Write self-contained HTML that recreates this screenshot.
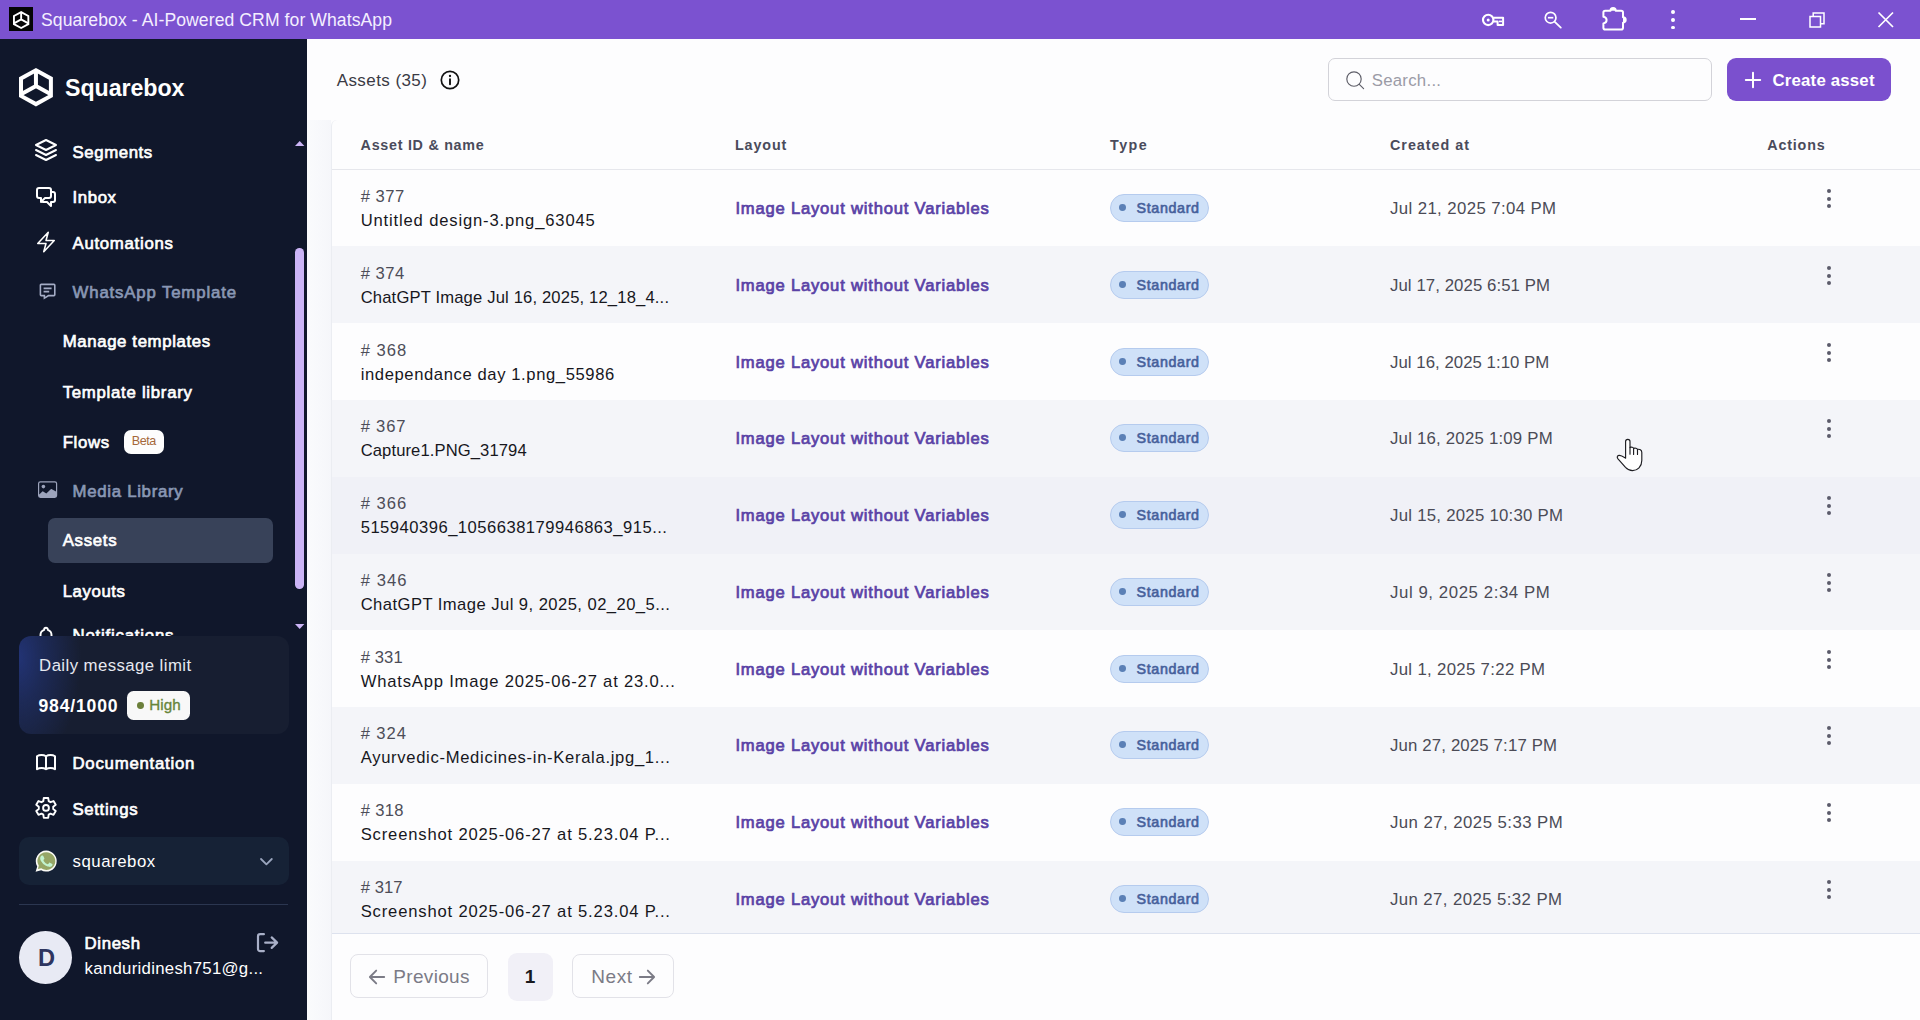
<!DOCTYPE html>
<html><head><meta charset="utf-8"><title>Squarebox - AI-Powered CRM for WhatsApp</title>
<style>
html,body{margin:0;padding:0;}
body{width:1920px;height:1020px;overflow:hidden;position:relative;background:#fdfdfe;font-family:"Liberation Sans",sans-serif;}
.t{position:absolute;white-space:pre;font-family:"Liberation Sans",sans-serif;}
div{box-sizing:border-box;}
</style></head><body>
<div style="position:absolute;left:307px;top:38.6px;width:1613.00px;height:981.40px;background:#fdfdfe;"></div>
<div style="position:absolute;left:307px;top:120.4px;width:24.00px;height:899.60px;background:linear-gradient(90deg,#fafbfd 0%,#f8f9fc 45%,#f5f6fa 100%);"></div>
<div style="position:absolute;left:330.6px;top:120.4px;width:1589.40px;height:899.60px;background:#fdfdfe;border-left:1px solid #ebedf2;border-top-left-radius:6px;"></div>
<div style="position:absolute;left:331.6px;top:168.8px;width:1588.40px;height:1.00px;background:#e6e7ec;"></div>
<div style="position:absolute;left:331.6px;top:169.6px;width:1588.40px;height:76.80px;background:#fdfdfe;"></div>
<div style="position:absolute;left:1109.9px;top:193.8px;width:99.40px;height:28.10px;background:#cfe1f8;border:1px solid #b5cbee;border-radius:14.5px;"></div>
<div style="position:absolute;left:1119px;top:204.4px;width:6.80px;height:6.80px;background:#5b80b6;border-radius:50%;"></div>
<div style="position:absolute;left:1827.2px;top:188.6px;width:4.20px;height:4.20px;background:#5b5b6b;border-radius:50%;"></div>
<div style="position:absolute;left:1827.2px;top:196.5px;width:4.20px;height:4.20px;background:#5b5b6b;border-radius:50%;"></div>
<div style="position:absolute;left:1827.2px;top:204.3px;width:4.20px;height:4.20px;background:#5b5b6b;border-radius:50%;"></div>
<div style="position:absolute;left:331.6px;top:246.4px;width:1588.40px;height:76.80px;background:#f4f5f9;"></div>
<div style="position:absolute;left:1109.9px;top:270.8px;width:99.40px;height:28.10px;background:#cfe1f8;border:1px solid #b5cbee;border-radius:14.5px;"></div>
<div style="position:absolute;left:1119px;top:281.4px;width:6.80px;height:6.80px;background:#5b80b6;border-radius:50%;"></div>
<div style="position:absolute;left:1827.2px;top:265.6px;width:4.20px;height:4.20px;background:#5b5b6b;border-radius:50%;"></div>
<div style="position:absolute;left:1827.2px;top:273.5px;width:4.20px;height:4.20px;background:#5b5b6b;border-radius:50%;"></div>
<div style="position:absolute;left:1827.2px;top:281.3px;width:4.20px;height:4.20px;background:#5b5b6b;border-radius:50%;"></div>
<div style="position:absolute;left:331.6px;top:323.2px;width:1588.40px;height:76.80px;background:#fdfdfe;"></div>
<div style="position:absolute;left:1109.9px;top:347.8px;width:99.40px;height:28.10px;background:#cfe1f8;border:1px solid #b5cbee;border-radius:14.5px;"></div>
<div style="position:absolute;left:1119px;top:358.4px;width:6.80px;height:6.80px;background:#5b80b6;border-radius:50%;"></div>
<div style="position:absolute;left:1827.2px;top:342.6px;width:4.20px;height:4.20px;background:#5b5b6b;border-radius:50%;"></div>
<div style="position:absolute;left:1827.2px;top:350.5px;width:4.20px;height:4.20px;background:#5b5b6b;border-radius:50%;"></div>
<div style="position:absolute;left:1827.2px;top:358.3px;width:4.20px;height:4.20px;background:#5b5b6b;border-radius:50%;"></div>
<div style="position:absolute;left:331.6px;top:400.0px;width:1588.40px;height:76.80px;background:#f4f5f9;"></div>
<div style="position:absolute;left:1109.9px;top:423.8px;width:99.40px;height:28.10px;background:#cfe1f8;border:1px solid #b5cbee;border-radius:14.5px;"></div>
<div style="position:absolute;left:1119px;top:434.4px;width:6.80px;height:6.80px;background:#5b80b6;border-radius:50%;"></div>
<div style="position:absolute;left:1827.2px;top:418.6px;width:4.20px;height:4.20px;background:#5b5b6b;border-radius:50%;"></div>
<div style="position:absolute;left:1827.2px;top:426.5px;width:4.20px;height:4.20px;background:#5b5b6b;border-radius:50%;"></div>
<div style="position:absolute;left:1827.2px;top:434.3px;width:4.20px;height:4.20px;background:#5b5b6b;border-radius:50%;"></div>
<div style="position:absolute;left:331.6px;top:476.8px;width:1588.40px;height:76.80px;background:#f0f1f7;"></div>
<div style="position:absolute;left:1109.9px;top:500.8px;width:99.40px;height:28.10px;background:#cfe1f8;border:1px solid #b5cbee;border-radius:14.5px;"></div>
<div style="position:absolute;left:1119px;top:511.4px;width:6.80px;height:6.80px;background:#5b80b6;border-radius:50%;"></div>
<div style="position:absolute;left:1827.2px;top:495.6px;width:4.20px;height:4.20px;background:#5b5b6b;border-radius:50%;"></div>
<div style="position:absolute;left:1827.2px;top:503.5px;width:4.20px;height:4.20px;background:#5b5b6b;border-radius:50%;"></div>
<div style="position:absolute;left:1827.2px;top:511.3px;width:4.20px;height:4.20px;background:#5b5b6b;border-radius:50%;"></div>
<div style="position:absolute;left:331.6px;top:553.6px;width:1588.40px;height:76.80px;background:#f4f5f9;"></div>
<div style="position:absolute;left:1109.9px;top:577.8px;width:99.40px;height:28.10px;background:#cfe1f8;border:1px solid #b5cbee;border-radius:14.5px;"></div>
<div style="position:absolute;left:1119px;top:588.4px;width:6.80px;height:6.80px;background:#5b80b6;border-radius:50%;"></div>
<div style="position:absolute;left:1827.2px;top:572.6px;width:4.20px;height:4.20px;background:#5b5b6b;border-radius:50%;"></div>
<div style="position:absolute;left:1827.2px;top:580.5px;width:4.20px;height:4.20px;background:#5b5b6b;border-radius:50%;"></div>
<div style="position:absolute;left:1827.2px;top:588.3px;width:4.20px;height:4.20px;background:#5b5b6b;border-radius:50%;"></div>
<div style="position:absolute;left:331.6px;top:630.4px;width:1588.40px;height:76.80px;background:#fdfdfe;"></div>
<div style="position:absolute;left:1109.9px;top:654.8px;width:99.40px;height:28.10px;background:#cfe1f8;border:1px solid #b5cbee;border-radius:14.5px;"></div>
<div style="position:absolute;left:1119px;top:665.4px;width:6.80px;height:6.80px;background:#5b80b6;border-radius:50%;"></div>
<div style="position:absolute;left:1827.2px;top:649.6px;width:4.20px;height:4.20px;background:#5b5b6b;border-radius:50%;"></div>
<div style="position:absolute;left:1827.2px;top:657.5px;width:4.20px;height:4.20px;background:#5b5b6b;border-radius:50%;"></div>
<div style="position:absolute;left:1827.2px;top:665.3px;width:4.20px;height:4.20px;background:#5b5b6b;border-radius:50%;"></div>
<div style="position:absolute;left:331.6px;top:707.2px;width:1588.40px;height:76.80px;background:#f4f5f9;"></div>
<div style="position:absolute;left:1109.9px;top:730.8px;width:99.40px;height:28.10px;background:#cfe1f8;border:1px solid #b5cbee;border-radius:14.5px;"></div>
<div style="position:absolute;left:1119px;top:741.4px;width:6.80px;height:6.80px;background:#5b80b6;border-radius:50%;"></div>
<div style="position:absolute;left:1827.2px;top:725.6px;width:4.20px;height:4.20px;background:#5b5b6b;border-radius:50%;"></div>
<div style="position:absolute;left:1827.2px;top:733.5px;width:4.20px;height:4.20px;background:#5b5b6b;border-radius:50%;"></div>
<div style="position:absolute;left:1827.2px;top:741.3px;width:4.20px;height:4.20px;background:#5b5b6b;border-radius:50%;"></div>
<div style="position:absolute;left:331.6px;top:784.0px;width:1588.40px;height:76.80px;background:#fdfdfe;"></div>
<div style="position:absolute;left:1109.9px;top:807.8px;width:99.40px;height:28.10px;background:#cfe1f8;border:1px solid #b5cbee;border-radius:14.5px;"></div>
<div style="position:absolute;left:1119px;top:818.4px;width:6.80px;height:6.80px;background:#5b80b6;border-radius:50%;"></div>
<div style="position:absolute;left:1827.2px;top:802.6px;width:4.20px;height:4.20px;background:#5b5b6b;border-radius:50%;"></div>
<div style="position:absolute;left:1827.2px;top:810.5px;width:4.20px;height:4.20px;background:#5b5b6b;border-radius:50%;"></div>
<div style="position:absolute;left:1827.2px;top:818.3px;width:4.20px;height:4.20px;background:#5b5b6b;border-radius:50%;"></div>
<div style="position:absolute;left:331.6px;top:860.8px;width:1588.40px;height:72.50px;background:#f4f5f9;"></div>
<div style="position:absolute;left:1109.9px;top:884.8px;width:99.40px;height:28.10px;background:#cfe1f8;border:1px solid #b5cbee;border-radius:14.5px;"></div>
<div style="position:absolute;left:1119px;top:895.4px;width:6.80px;height:6.80px;background:#5b80b6;border-radius:50%;"></div>
<div style="position:absolute;left:1827.2px;top:879.6px;width:4.20px;height:4.20px;background:#5b5b6b;border-radius:50%;"></div>
<div style="position:absolute;left:1827.2px;top:887.5px;width:4.20px;height:4.20px;background:#5b5b6b;border-radius:50%;"></div>
<div style="position:absolute;left:1827.2px;top:895.3px;width:4.20px;height:4.20px;background:#5b5b6b;border-radius:50%;"></div>
<div style="position:absolute;left:331.6px;top:932.8px;width:1588.40px;height:1.00px;background:#dde2ee;"></div>
<div style="position:absolute;left:331.6px;top:933.8px;width:1588.40px;height:86.20px;background:#fdfdfe;"></div>
<div style="position:absolute;left:1328px;top:58px;width:383.70px;height:42.70px;background:#fdfdfe;border:1px solid #d3d3d9;border-radius:7px;"></div>
<svg style="position:absolute;left:1345px;top:70px;width:20px;height:20px;overflow:visible" viewBox="0 0 20 20" ><circle cx="9" cy="9" r="7.2" fill="none" stroke="#5e5e68" stroke-width="1.15"/><path d="M14.3 14.3 L18.6 18.6" stroke="#5e5e68" stroke-width="1.15" stroke-linecap="round"/></svg>
<div style="position:absolute;left:1727px;top:58px;width:164.00px;height:42.70px;background:#7b50ce;border-radius:9px;"></div>
<svg style="position:absolute;left:1744.8px;top:72px;width:16px;height:16px;overflow:visible" viewBox="0 0 16 16" ><path d="M8 0.8V15.2M0.8 8H15.2" stroke="#fff" stroke-width="2" stroke-linecap="round"/></svg>
<svg style="position:absolute;left:439.8px;top:70.4px;width:20px;height:20px;overflow:visible" viewBox="0 0 20 20" ><circle cx="10" cy="10" r="8.7" fill="none" stroke="#111" stroke-width="1.7"/><path d="M10 9.2V14.2" stroke="#111" stroke-width="1.9" stroke-linecap="round"/><circle cx="10" cy="6" r="1.15" fill="#111"/></svg>
<div style="position:absolute;left:350px;top:954.3px;width:137.50px;height:44.00px;background:#fdfdfe;border:1px solid #e2e2e8;border-radius:8px;"></div>
<div style="position:absolute;left:507.5px;top:953px;width:45.00px;height:47.50px;background:#f1f0f7;border-radius:9px;"></div>
<div style="position:absolute;left:572px;top:954.3px;width:101.70px;height:44.00px;background:#fdfdfe;border:1px solid #e2e2e8;border-radius:8px;"></div>
<svg style="position:absolute;left:369px;top:968.8px;width:16px;height:16px;overflow:visible" viewBox="0 0 16 16" ><path d="M15.2 8H1M7.2 1.6 0.9 8l6.3 6.4" fill="none" stroke="#7b7b86" stroke-width="1.9" stroke-linecap="round" stroke-linejoin="round"/></svg>
<svg style="position:absolute;left:638.6px;top:968.8px;width:16px;height:16px;overflow:visible" viewBox="0 0 16 16" ><path d="M0.8 8H15M8.8 1.6 15.1 8l-6.3 6.4" fill="none" stroke="#7b7b86" stroke-width="1.9" stroke-linecap="round" stroke-linejoin="round"/></svg>
<svg style="position:absolute;left:1600px;top:430px;width:60px;height:50px;overflow:visible" viewBox="1600 430 60 50"><path d="M1625.6 458.2L1625.6 441.600A2.200 2.200 0 0 1 1630 441.600L1630 447.600C1631.500 446.800 1633.200 447.300 1633.600 448.400C1635 447.800 1637 448.200 1637.500 449.500C1639.500 448.800 1641.800 450 1641.800 452.500L1641.800 460.500C1641.800 466.500 1637.500 470.600 1632.500 470.600C1629.500 470.600 1627.500 469.500 1625.500 467.400L1618 458.800C1616.500 457 1617.300 455.300 1619.500 455.300C1621.500 455.300 1623.500 456.800 1625.600 458.200Z" fill="#fff" stroke="#1d1d22" stroke-width="1.15" stroke-linejoin="round"/><path d="M1630 447.600V454.200M1633.600 448.600V454.400M1637.500 449.800V454.400" fill="none" stroke="#1d1d22" stroke-width="1.15" stroke-linecap="round"/></svg>
<div style="position:absolute;left:0px;top:0px;width:1920.00px;height:38.60px;background:#7b52d0;"></div>
<div style="position:absolute;left:9px;top:7px;width:24.00px;height:24.00px;background:#050505;"></div>
<svg style="position:absolute;left:12.8px;top:10.5px;width:16.30px;height:18.10px;overflow:visible" viewBox="0 0 16.30 18.10"><path d="M8.15 1.08 L15.35 4.95 L15.35 13.15 L8.15 17.02 L0.95 13.15 L0.95 4.95 Z" fill="none" stroke="#fff" stroke-width="1.9" stroke-linejoin="miter"/><path d="M8.15 1.38 L8.15 8.45 L0.95 12.32 M8.15 8.45 L15.35 12.32" fill="none" stroke="#fff" stroke-width="1.9" stroke-linejoin="miter"/></svg>
<svg style="position:absolute;left:0;top:0;width:1920px;height:39px;overflow:visible" viewBox="0 0 1920 39"><circle cx="1488.2" cy="19.9" r="5.2" fill="none" stroke="#fff" stroke-width="2.1"/><circle cx="1488.2" cy="19.9" r="1.5" fill="#fff"/><path d="M1493.2 17.8H1503.1V25.1H1497.6V21.6H1493.6" fill="none" stroke="#fff" stroke-width="2" stroke-linejoin="round"/><path d="M1499 21.4H1502" stroke="#fff" stroke-width="1.6"/><circle cx="1550.6" cy="17.7" r="5.35" fill="none" stroke="#fff" stroke-width="1.7"/><path d="M1554.8 21.9 1560.8 27.6" stroke="#fff" stroke-width="1.8" stroke-linecap="round"/><path d="M1547.9 17.7H1553.3" stroke="#fff" stroke-width="1.7"/><path d="M1605.2 10.700H1610.500A2.600 2.600 0 0 1 1615.700 10.700H1621.200Q1623 10.700 1623 12.500V17.300A2.700 2.700 0 0 1 1623 22.700V27.800Q1623 29.600 1621.200 29.600H1605.200Q1603.400 29.600 1603.400 27.800V23.400Q1606.600 22.900 1606.600 20.100Q1606.600 17.300 1603.400 16.800V12.500Q1603.400 10.700 1605.200 10.700Z" fill="none" stroke="#fff" stroke-width="2" stroke-linejoin="round"/><path d="M1623 17.300A2.700 2.700 0 0 1 1623 22.700Z" fill="#fff"/><path d="M1610.500 10.700A2.600 2.600 0 0 1 1615.700 10.700Z" fill="#fff"/></svg>
<div style="position:absolute;left:1671.1px;top:10.299999999999999px;width:3.80px;height:3.80px;background:#fff;border-radius:50%;"></div>
<div style="position:absolute;left:1671.1px;top:18.1px;width:3.80px;height:3.80px;background:#fff;border-radius:50%;"></div>
<div style="position:absolute;left:1671.1px;top:25.700000000000003px;width:3.80px;height:3.80px;background:#fff;border-radius:50%;"></div>
<div style="position:absolute;left:1740px;top:18.2px;width:15.50px;height:1.50px;background:#fff;"></div>
<svg style="position:absolute;left:1808.5px;top:11.5px;width:16px;height:16px;overflow:visible" viewBox="0 0 16 16" ><path d="M1 4.500h10.500v10.500H1Z" fill="none" stroke="#fff" stroke-width="1.500"/><path d="M4.200 4.300V1h10.800v10.800h-3.300" fill="none" stroke="#fff" stroke-width="1.500"/></svg>
<svg style="position:absolute;left:1878px;top:12px;width:15.5px;height:15.5px;overflow:visible" viewBox="0 0 15.5 15.5" ><path d="M0.500 0.500 15 15M15 0.500 0.500 15" stroke="#fff" stroke-width="1.700"/></svg>
<div style="position:absolute;left:0px;top:38.6px;width:307.00px;height:981.40px;background:#10172b;"></div>
<svg style="position:absolute;left:18.7px;top:68.2px;width:33.90px;height:38.40px;overflow:visible" viewBox="0 0 33.90 38.40"><path d="M16.95 2.28 L31.90 10.48 L31.90 27.92 L16.95 36.12 L2.00 27.92 L2.00 10.48 Z" fill="none" stroke="#fff" stroke-width="4.0" stroke-linejoin="miter"/><path d="M16.95 2.58 L16.95 18.00 L2.00 26.20 M16.95 18.00 L31.90 26.20" fill="none" stroke="#fff" stroke-width="4.0" stroke-linejoin="miter"/></svg>
<svg style="position:absolute;left:34.0px;top:137.9px;width:24px;height:24px;overflow:visible" viewBox="0 0 24 24" ><path d="M12 2 2 7l10 5 10-5-10-5ZM2 17l10 5 10-5M2 12l10 5 10-5" fill="none" stroke="#fff" stroke-width="2" stroke-linecap="round" stroke-linejoin="round"/></svg>
<svg style="position:absolute;left:34.0px;top:183.9px;width:24px;height:24px;overflow:visible" viewBox="0 0 24 24" ><path d="M17 8h2a2 2 0 012 2v6a2 2 0 01-2 2h-2v4l-4-4H9a1.994 1.994 0 01-1.414-.586m0 0L11 14h4a2 2 0 002-2V6a2 2 0 00-2-2H5a2 2 0 00-2 2v6a2 2 0 002 2h2v4l.586-.586z" fill="none" stroke="#fff" stroke-width="2.0" stroke-linecap="round" stroke-linejoin="round"/></svg>
<svg style="position:absolute;left:34.1px;top:229.9px;width:24px;height:24px;overflow:visible" viewBox="0 0 24 24" ><path d="m3.75 13.5 10.5-11.25L12 10.5h8.25L9.75 21.75 12 13.5H3.75Z" fill="none" stroke="#fff" stroke-width="1.55" stroke-linecap="round" stroke-linejoin="round"/></svg>
<svg style="position:absolute;left:37.8px;top:281.9px;width:19.2px;height:19.2px;overflow:visible" viewBox="0 0 24 24" ><path d="M20 2H4c-1.103 0-2 .894-2 1.992v12.016C2 17.106 2.897 18 4 18h3v4l6.351-4H20c1.103 0 2-.894 2-1.992V3.992A1.998 1.998 0 0 0 20 2zm0 14h-7.227L9 18.377V16H4V4h16v12z" fill="#a4acc5"/><path d="M7 7h10v2H7zm0 4h7v2H7z" fill="#a4acc5"/></svg>
<svg style="position:absolute;left:38.0px;top:479.8px;width:19.2px;height:19.2px;overflow:visible" viewBox="0 0 16 16" ><path d="M6.002 5.5a1.5 1.5 0 1 1-3 0 1.5 1.5 0 0 1 3 0z" fill="#9ca3bb"/><path d="M2.002 1a2 2 0 0 0-2 2v10a2 2 0 0 0 2 2h12a2 2 0 0 0 2-2V3a2 2 0 0 0-2-2h-12zm12 1a1 1 0 0 1 1 1v6.5l-3.777-1.947a.5.5 0 0 0-.577.093l-3.710 3.710-2.660-1.772a.5.5 0 0 0-.630.062L1.002 12V3a1 1 0 0 1 1-1h12z" fill="#9ca3bb"/></svg>
<svg style="position:absolute;left:35px;top:625px;width:22px;height:22px;overflow:visible" viewBox="0 0 24 24" ><path d="M15 17h5l-1.405-1.405A2.032 2.032 0 0118 14.158V11a6.002 6.002 0 00-4-5.659V5a2 2 0 10-4 0v.341C7.67 6.165 6 8.388 6 11v3.159c0 .538-.214 1.055-.595 1.436L4 17h5m6 0v1a3 3 0 11-6 0v-1m6 0H9" fill="none" stroke="#fff" stroke-width="2.1" stroke-linecap="round" stroke-linejoin="round"/></svg>
<svg style="position:absolute;left:34px;top:749.7px;width:24px;height:24px;overflow:visible" viewBox="0 0 24 24" ><path d="M12 6.253v13m0-13C10.832 5.477 9.246 5 7.5 5S4.168 5.477 3 6.253v13C4.168 18.477 5.754 18 7.5 18s3.332.477 4.5 1.253m0-13C13.168 5.477 14.754 5 16.5 5c1.747 0 3.332.477 4.5 1.253v13C19.832 18.477 18.247 18 16.5 18c-1.746 0-3.332.477-4.5 1.253" fill="none" stroke="#fff" stroke-width="2.0" stroke-linecap="round" stroke-linejoin="round"/></svg>
<svg style="position:absolute;left:0;top:0;width:307px;height:1020px;overflow:visible" viewBox="0 0 307 1020"><path d="M48.68 801.11 L48.21 797.94 L43.79 797.94 L43.32 801.11 L41.46 802.19 L38.48 801.01 L36.27 804.83 L38.78 806.82 L38.78 808.98 L36.27 810.97 L38.48 814.79 L41.46 813.61 L43.32 814.69 L43.79 817.86 L48.21 817.86 L48.68 814.69 L50.54 813.61 L53.52 814.79 L55.73 810.97 L53.22 808.98 L53.22 806.82 L55.73 804.83 L53.52 801.01 L50.54 802.19 Z" fill="none" stroke="#fff" stroke-width="1.9" stroke-linejoin="round"/><circle cx="46.0" cy="807.9" r="2.9" fill="none" stroke="#fff" stroke-width="1.9"/></svg>
<div style="position:absolute;left:295.4px;top:248.4px;width:8.80px;height:340.20px;background:#cbb4f6;border-radius:4.4px;"></div>
<svg style="position:absolute;left:294.8px;top:141.2px;width:9.4px;height:5px;overflow:visible" viewBox="0 0 9.4 5" ><path d="M0 5 4.700 0 9.400 5Z" fill="#cbb4f6"/></svg>
<svg style="position:absolute;left:294.8px;top:624.0px;width:9.4px;height:5px;overflow:visible" viewBox="0 0 9.4 5" ><path d="M0 0 4.700 5 9.400 0Z" fill="#cbb4f6"/></svg>
<div style="position:absolute;left:48px;top:518px;width:225.30px;height:45.10px;background:#384259;border-radius:7px;"></div>
<div style="position:absolute;left:123.8px;top:430.2px;width:40.20px;height:24.10px;background:#fdfdfd;border-radius:7px;"></div>
<div class="t" style="left:72.50px;top:626px;font-size:16.8px;line-height:19px;color:#ffffff;letter-spacing:0.799px;-webkit-text-stroke:0.67px currentColor;">Notifications</div>
<div style="position:absolute;left:19px;top:635.7px;width:269.50px;height:98.30px;background:radial-gradient(ellipse 62px 115px at 0% 22%, #223374 0%, rgba(31,46,100,0.75) 38%, rgba(23,30,49,0) 100%),#171e31;border-radius:12px;"></div>
<div style="position:absolute;left:127.2px;top:691.2px;width:62.80px;height:28.60px;background:#f8f8f8;border-radius:6.500px;"></div>
<div style="position:absolute;left:137.1px;top:702.1px;width:6.80px;height:6.80px;background:#6b7f3a;border-radius:50%;"></div>
<div style="position:absolute;left:19px;top:836.8px;width:269.50px;height:47.90px;background:#162236;border-radius:10px;"></div>
<svg style="position:absolute;left:35px;top:850px;width:22.2px;height:22.4px;overflow:visible" viewBox="0 0 22.2 22.4" ><path d="M11.200 0.600a10.500 10.500 0 0 0-9 15.800L0.600 21.800l5.600-1.500A10.500 10.500 0 1 0 11.200 0.600Z" fill="#fbfbf6"/><path d="M11.200 2.300a8.800 8.800 0 0 0-7.400 13.500l-.9 3.300 3.400-.9A8.800 8.800 0 1 0 11.200 2.300Z" fill="#96a666"/><path d="M8.300 6.300c-.3-.6-.5-.6-.8-.6h-.6c-.2 0-.6.100-.9.500-.3.300-1.100 1.100-1.100 2.700s1.200 3.100 1.300 3.300c.2.200 2.300 3.600 5.600 4.900 2.800 1.100 3.300.9 3.900.8.600-.1 1.900-.8 2.200-1.500.3-.8.300-1.400.2-1.500-.1-.200-.3-.200-.6-.400l-2.200-1.100c-.3-.1-.5-.2-.7.200-.2.300-.8 1.100-1 1.300-.2.200-.4.200-.7.100-.3-.2-1.400-.5-2.600-1.600-1-.9-1.600-1.900-1.800-2.300-.2-.3 0-.5.100-.7l.5-.600c.200-.200.200-.300.300-.500.100-.200.100-.400 0-.600Z" fill="#c2f3cf" transform="translate(0.6,0.200) scale(0.93)"/></svg>
<svg style="position:absolute;left:259.6px;top:858.4px;width:12.8px;height:7.4px;overflow:visible" viewBox="0 0 12.8 7.4" ><path d="M1 1 6.400 6.400 11.800 1" fill="none" stroke="#9aa5bd" stroke-width="1.800" stroke-linecap="round" stroke-linejoin="round"/></svg>
<div style="position:absolute;left:19.2px;top:904.0px;width:268.60px;height:1.00px;background:#2b3650;"></div>
<div style="position:absolute;left:18.8px;top:930.8px;width:53.40px;height:53.40px;background:#e8eaf4;border-radius:50%;"></div>
<svg style="position:absolute;left:0;top:0;width:307px;height:1020px;overflow:visible" viewBox="0 0 307 1020"><path d="M263.9 934.2H260.2a2.200 2.200 0 0 0-2.200 2.200V948.9a2.200 2.200 0 0 0 2.200 2.200H263.9M265.200 942.650H277M271.700 937.400 277.100 942.650 271.700 947.900" fill="none" stroke="#a9b0c8" stroke-width="2.200" stroke-linecap="round" stroke-linejoin="round"/></svg>
<div class="t" style="left:41.00px;top:10px;font-size:17.6px;line-height:20px;color:#f4efff;letter-spacing:0.076px;">Squarebox - AI-Powered CRM for WhatsApp</div>
<div class="t" style="left:65.00px;top:75px;font-size:23.2px;line-height:26px;color:#fff;font-weight:700;letter-spacing:-0.055px;">Squarebox</div>
<div class="t" style="left:72.50px;top:143px;font-size:16.8px;line-height:19px;color:#ffffff;letter-spacing:0.591px;-webkit-text-stroke:0.67px currentColor;">Segments</div>
<div class="t" style="left:72.50px;top:188px;font-size:16.8px;line-height:19px;color:#ffffff;letter-spacing:0.609px;-webkit-text-stroke:0.67px currentColor;">Inbox</div>
<div class="t" style="left:72.50px;top:234px;font-size:16.8px;line-height:19px;color:#ffffff;letter-spacing:0.712px;-webkit-text-stroke:0.67px currentColor;">Automations</div>
<div class="t" style="left:72.50px;top:283px;font-size:16.8px;line-height:19px;color:#8997b4;letter-spacing:0.852px;-webkit-text-stroke:0.67px currentColor;">WhatsApp Template</div>
<div class="t" style="left:62.70px;top:332px;font-size:16.8px;line-height:19px;color:#ffffff;letter-spacing:0.622px;-webkit-text-stroke:0.67px currentColor;">Manage templates</div>
<div class="t" style="left:62.70px;top:383px;font-size:16.8px;line-height:19px;color:#ffffff;letter-spacing:0.716px;-webkit-text-stroke:0.67px currentColor;">Template library</div>
<div class="t" style="left:62.70px;top:433px;font-size:16.8px;line-height:19px;color:#ffffff;letter-spacing:0.643px;-webkit-text-stroke:0.67px currentColor;">Flows</div>
<div class="t" style="left:131.70px;top:434px;font-size:12.6px;line-height:14px;color:#a5683a;letter-spacing:-0.407px;">Beta</div>
<div class="t" style="left:72.50px;top:482px;font-size:16.8px;line-height:19px;color:#8997b4;letter-spacing:0.711px;-webkit-text-stroke:0.67px currentColor;">Media Library</div>
<div class="t" style="left:62.70px;top:531px;font-size:16.8px;line-height:19px;color:#ffffff;letter-spacing:0.705px;-webkit-text-stroke:0.67px currentColor;">Assets</div>
<div class="t" style="left:62.70px;top:582px;font-size:16.8px;line-height:19px;color:#ffffff;letter-spacing:0.586px;-webkit-text-stroke:0.67px currentColor;">Layouts</div>
<div class="t" style="left:39.10px;top:656px;font-size:16.8px;line-height:19px;color:#e6e9f0;letter-spacing:0.414px;">Daily message limit</div>
<div class="t" style="left:38.50px;top:696px;font-size:17.6px;line-height:20px;color:#fff;font-weight:700;letter-spacing:0.816px;">984/1000</div>
<div class="t" style="left:149.30px;top:696px;font-size:15.2px;line-height:17px;color:#67853a;letter-spacing:0.050px;-webkit-text-stroke:0.35px currentColor;">High</div>
<div class="t" style="left:72.50px;top:754px;font-size:16.8px;line-height:19px;color:#ffffff;letter-spacing:0.752px;-webkit-text-stroke:0.67px currentColor;">Documentation</div>
<div class="t" style="left:72.50px;top:800px;font-size:16.8px;line-height:19px;color:#ffffff;letter-spacing:0.637px;-webkit-text-stroke:0.67px currentColor;">Settings</div>
<div class="t" style="left:72.50px;top:852px;font-size:16.8px;line-height:19px;color:#fff;letter-spacing:0.541px;">squarebox</div>
<div class="t" style="left:37.90px;top:945px;font-size:23.6px;line-height:26px;color:#2e3560;font-weight:700;">D</div>
<div class="t" style="left:84.50px;top:934px;font-size:16.8px;line-height:19px;color:#fff;letter-spacing:0.650px;-webkit-text-stroke:0.67px currentColor;">Dinesh</div>
<div class="t" style="left:84.50px;top:959px;font-size:16.8px;line-height:19px;color:#fff;letter-spacing:0.283px;">kanduridinesh751@g...</div>
<div class="t" style="left:336.70px;top:71px;font-size:17px;line-height:19px;color:#3a3a44;letter-spacing:0.422px;">Assets (35)</div>
<div class="t" style="left:1371.70px;top:71px;font-size:16.8px;line-height:19px;color:#9b9ba6;letter-spacing:0.266px;">Search...</div>
<div class="t" style="left:1772.50px;top:71px;font-size:16.8px;line-height:19px;color:#fff;font-weight:700;letter-spacing:0.197px;">Create asset</div>
<div class="t" style="left:360.60px;top:137px;font-size:14.3px;line-height:16px;color:#4a4b5b;font-weight:700;letter-spacing:0.734px;">Asset ID &amp; name</div>
<div class="t" style="left:735.00px;top:137px;font-size:14.3px;line-height:16px;color:#4a4b5b;font-weight:700;letter-spacing:0.885px;">Layout</div>
<div class="t" style="left:1110.00px;top:137px;font-size:14.3px;line-height:16px;color:#4a4b5b;font-weight:700;letter-spacing:1.496px;">Type</div>
<div class="t" style="left:1390.00px;top:137px;font-size:14.3px;line-height:16px;color:#4a4b5b;font-weight:700;letter-spacing:1.009px;">Created at</div>
<div class="t" style="left:1767.30px;top:137px;font-size:14.3px;line-height:16px;color:#4a4b5b;font-weight:700;letter-spacing:0.827px;">Actions</div>
<div class="t" style="left:360.70px;top:187px;font-size:16.6px;line-height:19px;color:#4d4d58;letter-spacing:0.517px;"># 377</div>
<div class="t" style="left:360.70px;top:211px;font-size:16.6px;line-height:19px;color:#17171d;letter-spacing:0.842px;">Untitled design-3.png_63045</div>
<div class="t" style="left:735.40px;top:199px;font-size:16.6px;line-height:19px;color:#5a42a6;letter-spacing:0.800px;-webkit-text-stroke:0.72px currentColor;">Image Layout without Variables</div>
<div class="t" style="left:1136.60px;top:200px;font-size:14.3px;line-height:16px;color:#46609b;letter-spacing:0.624px;-webkit-text-stroke:0.62px currentColor;">Standard</div>
<div class="t" style="left:1390.00px;top:199px;font-size:16.8px;line-height:19px;color:#4b4b56;letter-spacing:0.389px;">Jul 21, 2025 7:04 PM</div>
<div class="t" style="left:360.70px;top:264px;font-size:16.6px;line-height:19px;color:#4d4d58;letter-spacing:0.517px;"># 374</div>
<div class="t" style="left:360.70px;top:288px;font-size:16.6px;line-height:19px;color:#17171d;letter-spacing:0.163px;">ChatGPT Image Jul 16, 2025, 12_18_4...</div>
<div class="t" style="left:735.40px;top:276px;font-size:16.6px;line-height:19px;color:#5a42a6;letter-spacing:0.800px;-webkit-text-stroke:0.72px currentColor;">Image Layout without Variables</div>
<div class="t" style="left:1136.60px;top:277px;font-size:14.3px;line-height:16px;color:#46609b;letter-spacing:0.624px;-webkit-text-stroke:0.62px currentColor;">Standard</div>
<div class="t" style="left:1390.00px;top:276px;font-size:16.8px;line-height:19px;color:#4b4b56;letter-spacing:0.073px;">Jul 17, 2025 6:51 PM</div>
<div class="t" style="left:360.70px;top:341px;font-size:16.6px;line-height:19px;color:#4d4d58;letter-spacing:0.992px;"># 368</div>
<div class="t" style="left:360.70px;top:365px;font-size:16.6px;line-height:19px;color:#17171d;letter-spacing:0.609px;">independance day 1.png_55986</div>
<div class="t" style="left:735.40px;top:353px;font-size:16.6px;line-height:19px;color:#5a42a6;letter-spacing:0.800px;-webkit-text-stroke:0.72px currentColor;">Image Layout without Variables</div>
<div class="t" style="left:1136.60px;top:354px;font-size:14.3px;line-height:16px;color:#46609b;letter-spacing:0.624px;-webkit-text-stroke:0.62px currentColor;">Standard</div>
<div class="t" style="left:1390.00px;top:353px;font-size:16.8px;line-height:19px;color:#4b4b56;letter-spacing:0.036px;">Jul 16, 2025 1:10 PM</div>
<div class="t" style="left:360.70px;top:417px;font-size:16.6px;line-height:19px;color:#4d4d58;letter-spacing:0.792px;"># 367</div>
<div class="t" style="left:360.70px;top:441px;font-size:16.6px;line-height:19px;color:#17171d;letter-spacing:0.105px;">Capture1.PNG_31794</div>
<div class="t" style="left:735.40px;top:429px;font-size:16.6px;line-height:19px;color:#5a42a6;letter-spacing:0.800px;-webkit-text-stroke:0.72px currentColor;">Image Layout without Variables</div>
<div class="t" style="left:1136.60px;top:430px;font-size:14.3px;line-height:16px;color:#46609b;letter-spacing:0.624px;-webkit-text-stroke:0.62px currentColor;">Standard</div>
<div class="t" style="left:1390.00px;top:429px;font-size:16.8px;line-height:19px;color:#4b4b56;letter-spacing:0.215px;">Jul 16, 2025 1:09 PM</div>
<div class="t" style="left:360.70px;top:494px;font-size:16.6px;line-height:19px;color:#4d4d58;letter-spacing:0.992px;"># 366</div>
<div class="t" style="left:360.70px;top:518px;font-size:16.6px;line-height:19px;color:#17171d;letter-spacing:0.487px;">515940396_1056638179946863_915...</div>
<div class="t" style="left:735.40px;top:506px;font-size:16.6px;line-height:19px;color:#5a42a6;letter-spacing:0.800px;-webkit-text-stroke:0.72px currentColor;">Image Layout without Variables</div>
<div class="t" style="left:1136.60px;top:507px;font-size:14.3px;line-height:16px;color:#46609b;letter-spacing:0.624px;-webkit-text-stroke:0.62px currentColor;">Standard</div>
<div class="t" style="left:1390.00px;top:506px;font-size:16.8px;line-height:19px;color:#4b4b56;letter-spacing:0.253px;">Jul 15, 2025 10:30 PM</div>
<div class="t" style="left:360.70px;top:571px;font-size:16.6px;line-height:19px;color:#4d4d58;letter-spacing:1.067px;"># 346</div>
<div class="t" style="left:360.70px;top:595px;font-size:16.6px;line-height:19px;color:#17171d;letter-spacing:0.451px;">ChatGPT Image Jul 9, 2025, 02_20_5...</div>
<div class="t" style="left:735.40px;top:583px;font-size:16.6px;line-height:19px;color:#5a42a6;letter-spacing:0.800px;-webkit-text-stroke:0.72px currentColor;">Image Layout without Variables</div>
<div class="t" style="left:1136.60px;top:584px;font-size:14.3px;line-height:16px;color:#46609b;letter-spacing:0.624px;-webkit-text-stroke:0.62px currentColor;">Standard</div>
<div class="t" style="left:1390.00px;top:583px;font-size:16.8px;line-height:19px;color:#4b4b56;letter-spacing:0.580px;">Jul 9, 2025 2:34 PM</div>
<div class="t" style="left:360.70px;top:648px;font-size:16.6px;line-height:19px;color:#4d4d58;letter-spacing:0.117px;"># 331</div>
<div class="t" style="left:360.70px;top:672px;font-size:16.6px;line-height:19px;color:#17171d;letter-spacing:0.809px;">WhatsApp Image 2025-06-27 at 23.0...</div>
<div class="t" style="left:735.40px;top:660px;font-size:16.6px;line-height:19px;color:#5a42a6;letter-spacing:0.800px;-webkit-text-stroke:0.72px currentColor;">Image Layout without Variables</div>
<div class="t" style="left:1136.60px;top:661px;font-size:14.3px;line-height:16px;color:#46609b;letter-spacing:0.624px;-webkit-text-stroke:0.62px currentColor;">Standard</div>
<div class="t" style="left:1390.00px;top:660px;font-size:16.8px;line-height:19px;color:#4b4b56;letter-spacing:0.319px;">Jul 1, 2025 7:22 PM</div>
<div class="t" style="left:360.70px;top:724px;font-size:16.6px;line-height:19px;color:#4d4d58;letter-spacing:0.917px;"># 324</div>
<div class="t" style="left:360.70px;top:748px;font-size:16.6px;line-height:19px;color:#17171d;letter-spacing:0.690px;">Ayurvedic-Medicines-in-Kerala.jpg_1...</div>
<div class="t" style="left:735.40px;top:736px;font-size:16.6px;line-height:19px;color:#5a42a6;letter-spacing:0.800px;-webkit-text-stroke:0.72px currentColor;">Image Layout without Variables</div>
<div class="t" style="left:1136.60px;top:737px;font-size:14.3px;line-height:16px;color:#46609b;letter-spacing:0.624px;-webkit-text-stroke:0.62px currentColor;">Standard</div>
<div class="t" style="left:1390.00px;top:736px;font-size:16.8px;line-height:19px;color:#4b4b56;letter-spacing:0.147px;">Jun 27, 2025 7:17 PM</div>
<div class="t" style="left:360.70px;top:801px;font-size:16.6px;line-height:19px;color:#4d4d58;letter-spacing:0.342px;"># 318</div>
<div class="t" style="left:360.70px;top:825px;font-size:16.6px;line-height:19px;color:#17171d;letter-spacing:0.835px;">Screenshot 2025-06-27 at 5.23.04 P...</div>
<div class="t" style="left:735.40px;top:813px;font-size:16.6px;line-height:19px;color:#5a42a6;letter-spacing:0.800px;-webkit-text-stroke:0.72px currentColor;">Image Layout without Variables</div>
<div class="t" style="left:1136.60px;top:814px;font-size:14.3px;line-height:16px;color:#46609b;letter-spacing:0.624px;-webkit-text-stroke:0.62px currentColor;">Standard</div>
<div class="t" style="left:1390.00px;top:813px;font-size:16.8px;line-height:19px;color:#4b4b56;letter-spacing:0.447px;">Jun 27, 2025 5:33 PM</div>
<div class="t" style="left:360.70px;top:878px;font-size:16.6px;line-height:19px;color:#4d4d58;letter-spacing:0.092px;"># 317</div>
<div class="t" style="left:360.70px;top:902px;font-size:16.6px;line-height:19px;color:#17171d;letter-spacing:0.835px;">Screenshot 2025-06-27 at 5.23.04 P...</div>
<div class="t" style="left:735.40px;top:890px;font-size:16.6px;line-height:19px;color:#5a42a6;letter-spacing:0.800px;-webkit-text-stroke:0.72px currentColor;">Image Layout without Variables</div>
<div class="t" style="left:1136.60px;top:891px;font-size:14.3px;line-height:16px;color:#46609b;letter-spacing:0.624px;-webkit-text-stroke:0.62px currentColor;">Standard</div>
<div class="t" style="left:1390.00px;top:890px;font-size:16.8px;line-height:19px;color:#4b4b56;letter-spacing:0.410px;">Jun 27, 2025 5:32 PM</div>
<div class="t" style="left:393.30px;top:966px;font-size:19px;line-height:21px;color:#7b7b86;letter-spacing:0.325px;">Previous</div>
<div class="t" style="left:524.71px;top:966px;font-size:19px;line-height:21px;color:#1a1a1f;font-weight:700;">1</div>
<div class="t" style="left:591.30px;top:966px;font-size:19px;line-height:21px;color:#7b7b86;letter-spacing:0.541px;">Next</div>
</body></html>
